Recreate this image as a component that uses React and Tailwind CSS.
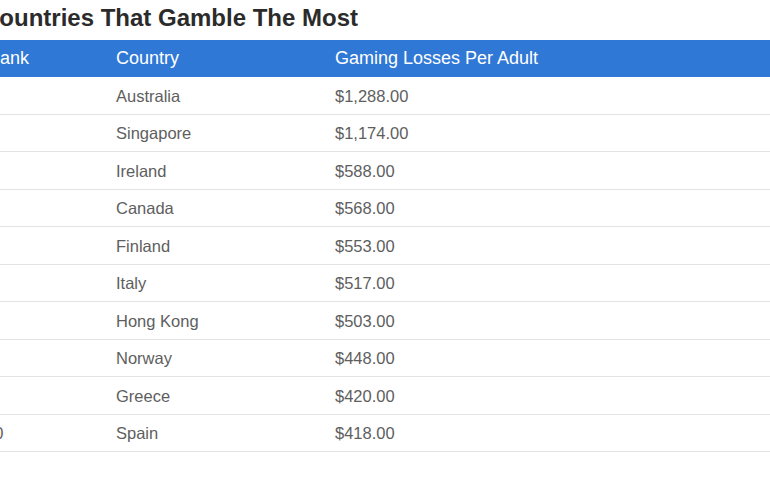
import React from 'react'

const rows = [
  ['1', 'Australia', '$1,288.00'],
  ['2', 'Singapore', '$1,174.00'],
  ['3', 'Ireland', '$588.00'],
  ['4', 'Canada', '$568.00'],
  ['5', 'Finland', '$553.00'],
  ['6', 'Italy', '$517.00'],
  ['7', 'Hong Kong', '$503.00'],
  ['8', 'Norway', '$448.00'],
  ['9', 'Greece', '$420.00'],
  ['10', 'Spain', '$418.00'],
]

export default function App() {
  return (
    <div className="w-[770px] h-[480px] overflow-hidden bg-white font-['Liberation_Sans',Arial,sans-serif]">
      {/* Title, cropped on the left like the source */}
      <h2 className="ml-[-18px] pt-[3px] mb-[8px] text-[24px] leading-[29px] font-bold text-[#2b2b2b] whitespace-nowrap">
        Countries That Gamble The Most
      </h2>

      <div className="ml-[-24px] w-[800px]">
        {/* Header */}
        <div className="grid grid-cols-[129px_219px_1fr] h-[37px] items-center bg-[#2f78d6] text-white text-[18px]">
          <div className="px-[11px]">Rank</div>
          <div className="px-[11px]">Country</div>
          <div className="px-[11px]">Gaming Losses Per Adult</div>
        </div>

        {/* Body */}
        {rows.map(([rank, country, loss]) => (
          <div
            key={rank}
            className="grid grid-cols-[129px_219px_1fr] h-[37.5px] items-center pt-[2px] border-b border-[#e3e3e3] text-[16.5px] text-[#5e5e5e]"
          >
            <div className="pl-[9px] pr-[11px]">{rank}</div>
            <div className="px-[11px]">{country}</div>
            <div className="px-[11px]">{loss}</div>
          </div>
        ))}
      </div>
    </div>
  )
}
